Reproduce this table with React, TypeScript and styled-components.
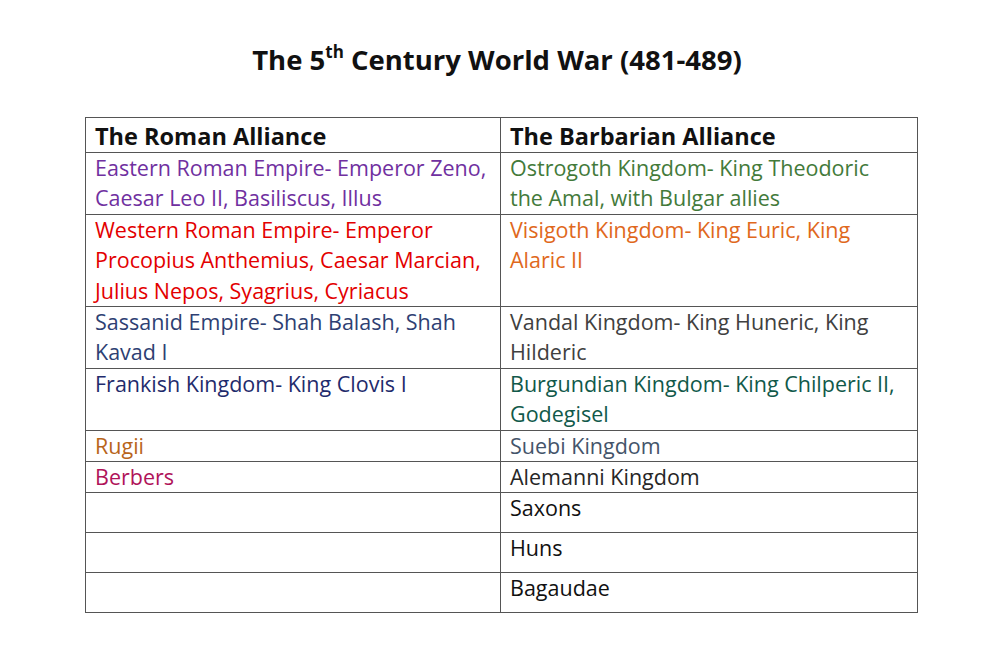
import React from "react";
import styled, { createGlobalStyle } from "styled-components";

const GlobalStyle = createGlobalStyle`
  html, body {
    margin: 0;
    padding: 0;
    background: #fff;
  }
  body {
    font-family: "Open Sans", "Liberation Sans", sans-serif;
  }
`;

const Page = styled.div`
  width: 994px;
  height: 666px;
  background: #fff;
  padding-top: 40px;
  box-sizing: border-box;
`;

const Title = styled.h1`
  margin: 0 0 37px 0;
  text-align: center;
  font-size: 27.5px;
  line-height: 40px;
  font-weight: bold;
  color: #111;

  sup {
    font-size: 17px;
    line-height: 0;
    vertical-align: 12px;
  }
`;

const Table = styled.table`
  margin-left: 85px;
  width: 832px;
  border-collapse: collapse;
  table-layout: fixed;
`;

const HeadCell = styled.th`
  border: 1px solid #555;
  padding: 3px 8px 1px 9px;
  height: 30px;
  text-align: left;
  vertical-align: top;
  font-size: 23.5px;
  line-height: 30px;
  font-weight: bold;
  color: #111;
`;

const Cell = styled.td<{ $color?: string; $spaced?: boolean }>`
  border: 1px solid #555;
  padding: 0 12px ${(p) => (p.$spaced ? "9px" : "0")} 9px;
  vertical-align: top;
  font-size: 21.5px;
  line-height: ${(p) => (p.$spaced ? "30px" : "30.4px")};
  color: ${(p) => p.$color || "#111"};
`;

interface Side {
  text: string;
  color?: string;
}

interface Row {
  left?: Side;
  right?: Side;
  spaced?: boolean;
}

const rows: Row[] = [
  {
    left: { text: "Eastern Roman Empire- Emperor Zeno, Caesar Leo II, Basiliscus, Illus", color: "#7030a0" },
    right: { text: "Ostrogoth Kingdom- King Theodoric the Amal, with Bulgar allies", color: "#437a3a" },
  },
  {
    left: { text: "Western Roman Empire- Emperor Procopius Anthemius, Caesar Marcian, Julius Nepos, Syagrius, Cyriacus", color: "#e30000" },
    right: { text: "Visigoth Kingdom- King Euric, King Alaric II", color: "#e0681c" },
  },
  {
    left: { text: "Sassanid Empire- Shah Balash, Shah Kavad I", color: "#2e3f73" },
    right: { text: "Vandal Kingdom- King Huneric, King Hilderic", color: "#404040" },
  },
  {
    left: { text: "Frankish Kingdom- King Clovis I", color: "#1f2b6c" },
    right: { text: "Burgundian Kingdom- King Chilperic II, Godegisel", color: "#11594a" },
  },
  {
    left: { text: "Rugii", color: "#b8651a" },
    right: { text: "Suebi Kingdom", color: "#44546a" },
  },
  {
    left: { text: "Berbers", color: "#b0145a" },
    right: { text: "Alemanni Kingdom", color: "#262626" },
  },
  { right: { text: "Saxons" }, spaced: true },
  { right: { text: "Huns" }, spaced: true },
  { right: { text: "Bagaudae" }, spaced: true },
];

export default function App() {
  return (
    <Page>
      <GlobalStyle />
      <Title>
        The 5<sup>th</sup> Century World War (481-489)
      </Title>
      <Table>
        <colgroup>
          <col style={{ width: 415 }} />
          <col style={{ width: 417 }} />
        </colgroup>
        <thead>
          <tr>
            <HeadCell>The Roman Alliance</HeadCell>
            <HeadCell>The Barbarian Alliance</HeadCell>
          </tr>
        </thead>
        <tbody>
          {rows.map((row, i) => (
            <tr key={i}>
              <Cell $color={row.left?.color} $spaced={row.spaced}>
                {row.left?.text}
              </Cell>
              <Cell $color={row.right?.color} $spaced={row.spaced}>
                {row.right?.text}
              </Cell>
            </tr>
          ))}
        </tbody>
      </Table>
    </Page>
  );
}
